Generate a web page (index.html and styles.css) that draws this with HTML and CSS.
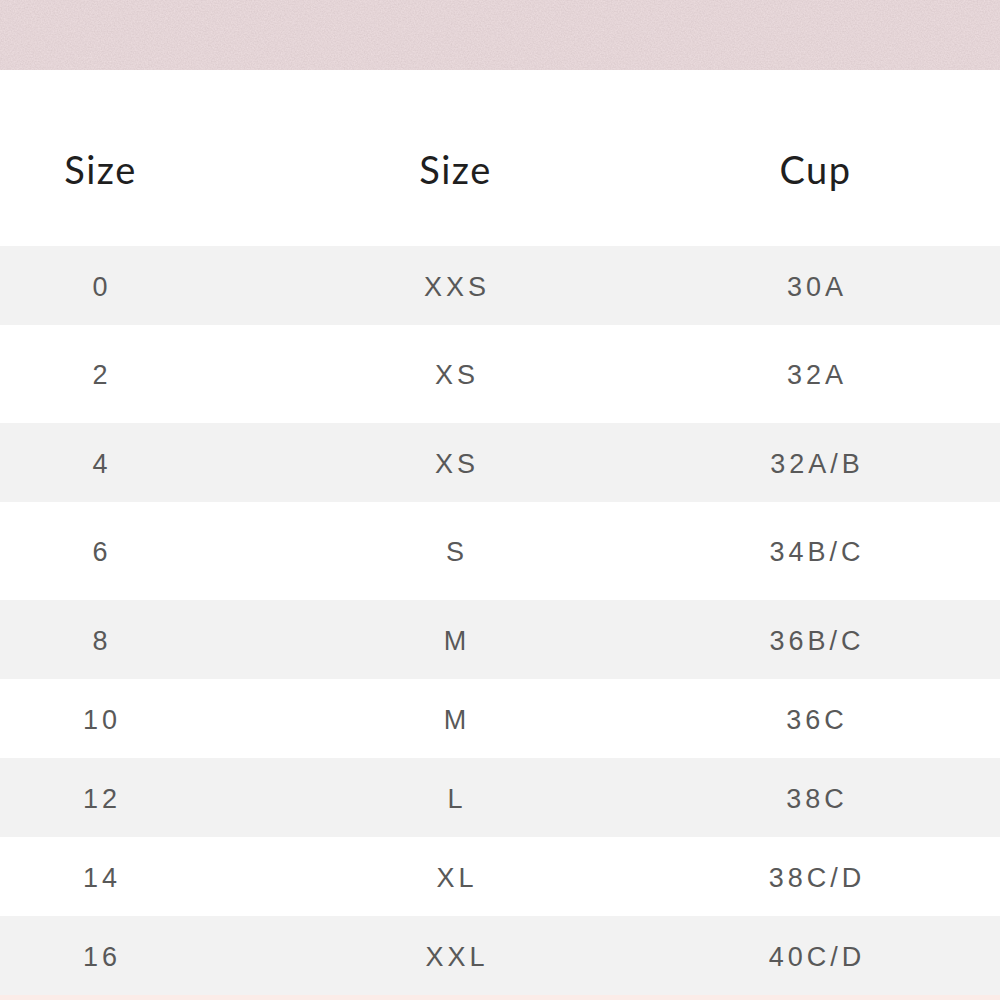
FILE: index.html
```html
<!DOCTYPE html>
<html>
<head>
<meta charset="utf-8">
<link rel="stylesheet" href="styles.css">
</head>
<body>
<div class="banner">
  <svg class="grain" width="1000" height="70" viewBox="0 0 1000 70" xmlns="http://www.w3.org/2000/svg">
    <filter id="noise" x="0" y="0" width="100%" height="100%">
      <feTurbulence type="fractalNoise" baseFrequency="0.7" numOctaves="3" seed="7" result="n"/>
      <feColorMatrix in="n" type="matrix" values="0.35 0 0 0 0.62  0.35 0 0 0 0.52  0.35 0 0 0 0.54  0 0 0 0 0.45"/>
    </filter>
    <rect width="1000" height="70" filter="url(#noise)"/>
  </svg>
</div>
<div class="table">
  <div class="row head"><div class="c1">Size</div><div class="c2">Size</div><div class="c3">Cup</div></div>
  <div class="row gray"><div class="c1">0</div><div class="c2">XXS</div><div class="c3">30A</div></div>
  <div class="row tall"><div class="c1">2</div><div class="c2">XS</div><div class="c3">32A</div></div>
  <div class="row gray"><div class="c1">4</div><div class="c2">XS</div><div class="c3">32A/B</div></div>
  <div class="row tall"><div class="c1">6</div><div class="c2">S</div><div class="c3">34B/C</div></div>
  <div class="row gray"><div class="c1">8</div><div class="c2">M</div><div class="c3">36B/C</div></div>
  <div class="row"><div class="c1">10</div><div class="c2">M</div><div class="c3">36C</div></div>
  <div class="row gray"><div class="c1">12</div><div class="c2">L</div><div class="c3">38C</div></div>
  <div class="row"><div class="c1">14</div><div class="c2">XL</div><div class="c3">38C/D</div></div>
  <div class="row gray"><div class="c1">16</div><div class="c2">XXL</div><div class="c3">40C/D</div></div>
</div>
<div class="footer-strip"></div>
</body>
</html>
```
FILE: styles.css
```css
html, body {
  margin: 0;
  padding: 0;
  background: #ffffff;
}
.banner {
  height: 70px;
  background-color: #e2d0d2;
  overflow: hidden;
}
.grain {
  display: block;
}
.table {
  display: flex;
  flex-direction: column;
}
.row {
  display: grid;
  grid-template-columns: 200px 510px 210px 1fr;
  align-items: center;
  height: 79px;
  font-family: "Liberation Sans", Arial, sans-serif;
  font-size: 27px;
  letter-spacing: 4px;
  color: #595959;
}
.row > div {
  text-align: center;
}
.row .c1, .row .c2, .row .c3 {
  padding-left: 4px;
  padding-top: 3px;
}
.row.head {
  height: 176px;
  box-sizing: border-box;
  padding-top: 22px;
  font-family: "Lato", "Noto Sans", sans-serif;
  font-size: 38px;
  letter-spacing: 1.5px;
  color: #1f1f1f;
}
.row.head > div {
  padding-left: 1px;
  padding-top: 0;
}
.row.gray {
  background: #f2f2f2;
}
.row.tall {
  height: 98px;
}
.footer-strip {
  height: 5px;
  background: #fbece8;
}
```
